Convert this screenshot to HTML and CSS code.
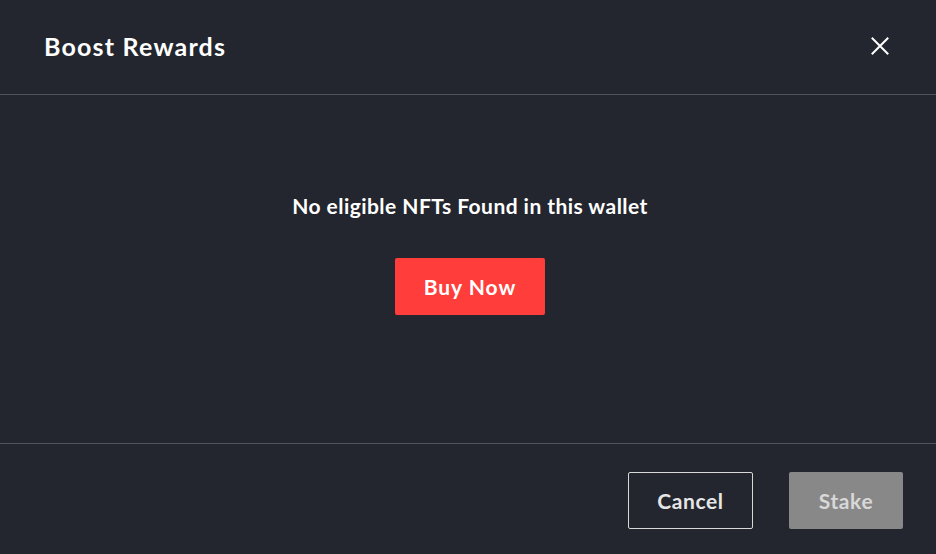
FILE: index.html
```html
<!DOCTYPE html>
<html>
<head>
<meta charset="utf-8">
<link rel="stylesheet" href="styles.css">
</head>
<body>
<div class="modal">
  <header class="modal-header">
    <h1 class="title">Boost Rewards</h1>
    <button class="close" aria-label="Close">
      <svg width="18" height="18" viewBox="0 0 18 18"><path d="M1.5 1.5 L16.5 16.5 M16.5 1.5 L1.5 16.5" stroke="#fff" stroke-width="2" stroke-linecap="square"/></svg>
    </button>
  </header>
  <main class="modal-body">
    <p class="empty">No eligible NFTs Found in this wallet</p>
    <button class="buy">Buy Now</button>
  </main>
  <footer class="modal-footer">
    <button class="btn cancel">Cancel</button>
    <button class="btn stake">Stake</button>
  </footer>
</div>
</body>
</html>
```
FILE: styles.css
```css
html, body {
  margin: 0;
  padding: 0;
  background: #23262e;
  font-family: "Lato", "Noto Sans", sans-serif;
  color: #fff;
}
.modal {
  width: 936px;
  height: 554px;
  display: flex;
  flex-direction: column;
}
.modal-header {
  height: 95px;
  box-sizing: border-box;
  border-bottom: 1px solid #50535a;
  display: flex;
  align-items: center;
  justify-content: space-between;
  padding: 0 47px 2px 44px;
}
.title {
  margin: 0;
  font-size: 25px;
  font-weight: 700;
  letter-spacing: 1.2px;
}
.close {
  background: none;
  border: 0;
  padding: 0;
  width: 18px;
  height: 18px;
  display: flex;
}
.modal-body {
  height: 349px;
  box-sizing: border-box;
  border-bottom: 1px solid #50535a;
  display: flex;
  flex-direction: column;
  align-items: center;
  padding: 99px 0 0 4px;
}
.empty {
  margin: 0;
  font-size: 21px;
  font-weight: 700;
  line-height: 24px;
  letter-spacing: 0.45px;
}
.buy {
  margin-top: 40px;
  width: 150px;
  height: 57px;
  background: #ff3e3b;
  color: #fff;
  border: 0;
  border-radius: 2px;
  font-family: inherit;
  font-size: 21px;
  font-weight: 700;
  letter-spacing: 1px;
}
.modal-footer {
  flex: 1;
  display: flex;
  justify-content: flex-end;
  align-items: flex-start;
  gap: 36px;
  padding: 28px 33px 0 0;
}
.btn {
  height: 57px;
  border-radius: 2px;
  font-family: inherit;
  font-size: 21px;
  font-weight: 700;
  letter-spacing: 0.6px;
}
.cancel {
  width: 125px;
  background: transparent;
  border: 1px solid #d8d8d8;
  color: #e6e6e6;
}
.stake {
  width: 114px;
  background: #898888;
  border: 0;
  color: #d8d8d8;
}
```
